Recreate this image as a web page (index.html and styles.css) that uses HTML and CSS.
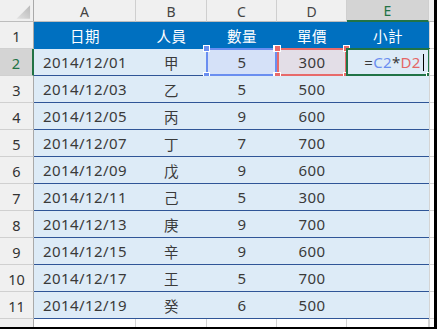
FILE: index.html
```html
<!DOCTYPE html>
<html lang="zh-Hant">
<head>
<meta charset="utf-8">
<link rel="stylesheet" href="styles.css">
</head>
<body>
<div class="sheet">
  <div class="grid">
    <div class="corner"><svg width="34" height="22" viewBox="0 0 34 22"><defs><linearGradient id="g" x1="0" y1="1" x2="1" y2="0"><stop offset="0" stop-color="#e2e2e2"/><stop offset="1" stop-color="#b9b9b9"/></linearGradient></defs><polygon points="17,19 31,19 31,5" fill="url(#g)"/></svg></div>
    <div class="ch">A</div><div class="ch">B</div><div class="ch">C</div><div class="ch">D</div><div class="ch ch-sel">E</div><div class="ch ch-f"></div>

    <div class="rh">1</div>
    <div class="th">日期</div><div class="th">人員</div><div class="th">數量</div><div class="th">單價</div><div class="th">小計</div><div class="f"></div>

    <div class="rh rh-sel">2</div>
    <div class="td">2014/12/01</div><div class="td cjk">甲</div>
    <div class="td ref-c">5<span class="box box-blue"><i class="h tl"></i><i class="h tr"></i><i class="h bl"></i><i class="h br"></i></span></div>
    <div class="td ref-d">300<span class="box box-red"><i class="h tl"></i><i class="h tr"></i><i class="h bl"></i><i class="h br"></i></span></div>
    <div class="td edit"><span class="formula">=<span class="c-blue">C2</span>*<span class="c-red">D2</span><span class="caret"></span></span><span class="box box-green"><i class="fill"></i></span></div>
    <div class="f"></div>

    <div class="rh">3</div><div class="td">2014/12/03</div><div class="td cjk">乙</div><div class="td">5</div><div class="td">500</div><div class="td"></div><div class="f"></div>
    <div class="rh">4</div><div class="td">2014/12/05</div><div class="td cjk">丙</div><div class="td">9</div><div class="td">600</div><div class="td"></div><div class="f"></div>
    <div class="rh">5</div><div class="td">2014/12/07</div><div class="td cjk">丁</div><div class="td">7</div><div class="td">700</div><div class="td"></div><div class="f"></div>
    <div class="rh">6</div><div class="td">2014/12/09</div><div class="td cjk">戊</div><div class="td">9</div><div class="td">600</div><div class="td"></div><div class="f"></div>
    <div class="rh">7</div><div class="td">2014/12/11</div><div class="td cjk">己</div><div class="td">5</div><div class="td">300</div><div class="td"></div><div class="f"></div>
    <div class="rh">8</div><div class="td">2014/12/13</div><div class="td cjk">庚</div><div class="td">9</div><div class="td">700</div><div class="td"></div><div class="f"></div>
    <div class="rh">9</div><div class="td">2014/12/15</div><div class="td cjk">辛</div><div class="td">9</div><div class="td">600</div><div class="td"></div><div class="f"></div>
    <div class="rh">10</div><div class="td">2014/12/17</div><div class="td cjk">王</div><div class="td">5</div><div class="td">700</div><div class="td"></div><div class="f"></div>
    <div class="rh">11</div><div class="td">2014/12/19</div><div class="td cjk">癸</div><div class="td">6</div><div class="td">500</div><div class="td"></div><div class="f"></div>

    <div class="rh rh-last"></div><div class="e"></div><div class="e"></div><div class="e"></div><div class="e"></div><div class="e"></div><div class="e e-f"></div>
  </div>
</div>
</body>
</html>
```

FILE: styles.css
```css
* { box-sizing: border-box; margin: 0; padding: 0; }
html, body { width: 437px; height: 329px; overflow: hidden; }
body { background: #000; }

.sheet {
  width: 434px;
  height: 327px;
  background: #fff;
  overflow: hidden;
}

.grid {
  display: grid;
  grid-template-columns: 34px 102px 71px 70px 70px 82px 5px;
  grid-template-rows: 22px repeat(11, 27px) 8px;
  font-family: "Noto Sans", "Noto Sans CJK TC", sans-serif;
  color: #333;
}

.grid > div {
  display: flex;
  align-items: center;
  justify-content: center;
  position: relative;
}

.corner {
  background: #f0f0f0;
  border-right: 1px solid #a9a9a9;
  border-bottom: 1px solid #bdbdbd;
}
.corner svg { display: block; }

.ch {
  background: #f0f0f0;
  border-right: 1px solid #cfcfcf;
  border-bottom: 1px solid #bdbdbd;
  font-size: 14px;
  color: #444;
  padding-top: 1px;
}
.ch-sel {
  background: #d4d4d4;
  color: #217346;
  border-bottom: 2px solid #217346;
}
.ch-f { border-right: none; background: #f0f0f0; }

.rh {
  background: #f0f0f0;
  border-right: 1px solid #a9a9a9;
  border-bottom: 1px solid #d0d0d0;
  font-size: 14.5px;
  color: #333;
  padding-top: 2px;
}
.rh-sel {
  background: #d4d4d4;
  color: #217346;
  border-right: 2px solid #217346;
}
.rh-last { border-bottom: none; }

.th {
  background: #0070c0;
  color: #fff;
  font-family: "Noto Sans CJK TC", sans-serif;
  font-size: 14.5px;
  letter-spacing: 0.5px;
}

.td {
  background: #ddebf7;
  border-bottom: 1px solid #2f5597;
  font-size: 15px;
  letter-spacing: 0.4px;
  color: #3a3a3a;
}
.cjk { font-family: "Noto Sans CJK TC", sans-serif; font-size: 14.5px; }

.f {
  background: #fff;
  border-left: 1px solid #d4d4d4;
  border-bottom: 1px solid #d4d4d4;
}

.e {
  background: #fff;
  border-right: 1px solid #d4d4d4;
}
.e-f { border-right: none; border-left: 1px solid #d4d4d4; }

.ref-c { background: #d5e1f8; }
.ref-d { background: #e3dee7; }

.box {
  position: absolute;
  top: -1px;
  bottom: -1px;
  left: -1px;
  right: 0;
  pointer-events: none;
}
.box-blue { border: 2px solid #6a8ef0; }
.box-red { border: 2px solid #e86a6a; left: 0; }
.box-green { border: 2px solid #217346; right: -1px; }

.h {
  position: absolute;
  width: 7px;
  height: 7px;
  border: 1px solid #fff;
}
.box-blue .h { background: #6a8ef0; }
.box-red .h { background: #e86a6a; }
.h.tl { left: -5px; top: -5px; }
.h.tr { right: -5px; top: -5px; }
.h.bl { left: -5px; bottom: -5px; }
.h.br { right: -5px; bottom: -5px; }

.fill {
  position: absolute;
  right: -5px;
  bottom: -5px;
  width: 7px;
  height: 7px;
  background: #217346;
  border: 1px solid #fff;
}

.edit { justify-content: flex-start; }
.formula {
  display: flex;
  align-items: center;
  padding-left: 12px;
  font-size: 15px;
  letter-spacing: 0.3px;
  color: #3a3a3a;
}
.c-blue { color: #6a8ef0; }
.c-red { color: #e46666; }
.caret {
  display: inline-block;
  width: 1px;
  height: 17px;
  background: #000;
  margin-left: 2px;
}
```
